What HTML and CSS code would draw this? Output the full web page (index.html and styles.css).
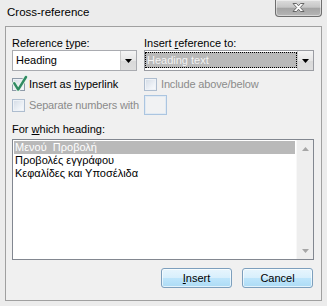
FILE: index.html
```html
<!DOCTYPE html>
<html>
<head>
<meta charset="utf-8">
<title>Cross-reference</title>
<link rel="stylesheet" href="styles.css">
</head>
<body>
<div class="window">
  <div class="titlebar">
    <span class="title">Cross-reference</span>
    <div class="close">
      <svg width="15" height="11" viewBox="0 0 15 11">
        <path d="M2 1.5 H5.5 L7.5 3.8 L9.5 1.5 H13 L9.3 5.5 L13 9.5 H9.5 L7.5 7.2 L5.5 9.5 H2 L5.7 5.5 Z" fill="#ffffff" stroke="#5a5a5a" stroke-width="0.9" stroke-linejoin="round"/>
      </svg>
    </div>
  </div>
  <div class="client">
    <div class="top">
      <div class="field">
        <div class="lbl">Reference <u>t</u>ype:</div>
        <div class="combo">
          <span class="combo-text">Heading</span>
          <span class="drop"><svg width="7" height="4" viewBox="0 0 7 4"><path d="M0 0 H7 L3.5 4 Z" fill="#000"/></svg></span>
        </div>
      </div>
      <div class="field">
        <div class="lbl">Insert <u>r</u>eference to:</div>
        <div class="combo combo-dark">
          <span class="combo-sel">Heading text</span>
          <span class="drop"><svg width="7" height="4" viewBox="0 0 7 4"><path d="M0 0 H7 L3.5 4 Z" fill="#000"/></svg></span>
        </div>
      </div>
      <div class="check-row r2">
        <span class="cb checked">
          <svg class="tick" width="16" height="17" viewBox="0 0 16 17">
            <path d="M2.2 8.2 L6.2 14.6 L14 2" fill="none" stroke="#e6f3ea" stroke-width="4.2" stroke-linecap="round" stroke-linejoin="round"/>
            <path d="M2.2 8.2 L6.2 14.6 L14 2" fill="none" stroke="#2f8a62" stroke-width="2.4" stroke-linecap="round" stroke-linejoin="round"/>
          </svg>
        </span>
        <span class="cb-text">Insert as <u>h</u>yperlink</span>
      </div>
      <div class="check-row r2">
        <span class="cb"></span>
        <span class="cb-text dis">Include above/below</span>
      </div>
      <div class="check-row r3">
        <span class="cb"></span>
        <span class="cb-text dis">Separate numbers with</span>
      </div>
      <div class="r3">
        <div class="textbox"></div>
      </div>
    </div>
    <div class="lbl lbl-list">For <u>w</u>hich heading:</div>
    <div class="listbox">
      <div class="items">
        <div class="item sel">Μενού  Προβολή</div>
        <div class="item">Προβολές εγγράφου</div>
        <div class="item">Κεφαλίδες και Υποσέλιδα</div>
      </div>
      <div class="vscroll">
        <div class="sbtn"><svg width="7" height="4" viewBox="0 0 7 4"><path d="M0 4 H7 L3.5 0 Z" fill="#a6a6a6"/></svg></div>
        <div class="sbtn"><svg width="7" height="4" viewBox="0 0 7 4"><path d="M0 0 H7 L3.5 4 Z" fill="#a6a6a6"/></svg></div>
      </div>
    </div>
    <div class="buttons">
      <div class="btn"><u>I</u>nsert</div>
      <div class="btn">Cancel</div>
    </div>
  </div>
</div>
</body>
</html>
```

FILE: styles.css
```css
* { box-sizing: border-box; }
html, body { margin: 0; padding: 0; }
body {
  width: 327px;
  height: 306px;
  overflow: hidden;
  background: #ececec;
  font-family: "Liberation Sans", Arial, sans-serif;
  font-size: 11px;
  color: #000;
}
u { text-decoration-thickness: 1px; text-underline-offset: 1px; }
.window {
  width: 327px;
  height: 306px;
  background: #ececec;
  display: flex;
  flex-direction: column;
}
.titlebar {
  height: 26px;
  display: flex;
  align-items: flex-start;
}
.title {
  padding: 5px 0 0 7px;
  font-size: 11.5px;
  line-height: 14px;
}
.close {
  margin-left: auto;
  margin-right: 5px;
  width: 47px;
  height: 17px;
  border: 1px solid #6e6e6e;
  border-top: none;
  border-radius: 0 0 4px 4px;
  background: linear-gradient(#dcdcdc, #c6c6c6 45%, #a4a4a4 52%, #b6b6b6);
  box-shadow: inset 0 0 0 1px rgba(255,255,255,0.45);
  display: flex;
  align-items: center;
  justify-content: center;
  padding-bottom: 2px;
}
.client {
  margin: 0 5px;
  height: 275px;
  border: 1px solid #a0a0a0;
  background: #f0f0f0;
  padding: 9px 7px 12px 6px;
  display: flex;
  flex-direction: column;
}
.top {
  display: grid;
  grid-template-columns: 125px 170px;
  column-gap: 7px;
}
.field { display: flex; flex-direction: column; }
.lbl { height: 14px; line-height: 14px; white-space: nowrap; }
.combo {
  height: 21px;
  border: 1px solid #a9abb0;
  background: #fff;
  display: flex;
  align-items: stretch;
}
.combo-dark { border-color: #9a9ca2; }
.combo-text {
  flex: 1;
  padding-left: 3px;
  line-height: 19px;
}
.combo-sel {
  flex: 1;
  margin: 1px 0 2px 0;
  background: #b9b9b9;
  color: #f4f4f4;
  border: 1px dotted #000;
  padding-left: 1px;
  line-height: 14px;
}
.drop {
  width: 16px;
  background: linear-gradient(#f4f4f4, #e6e6e6 50%, #d9d9d9 51%, #dedede);
  border-left: 1px solid #c9c9c9;
  display: flex;
  align-items: center;
  justify-content: center;
}
.check-row {
  display: flex;
  align-items: center;
  height: 13px;
  white-space: nowrap;
}
.r2 { margin-top: 7px; }
.r3 { margin-top: 4px; height: 20px; }
.cb {
  position: relative;
  width: 13px;
  height: 13px;
  flex: none;
  border: 1px solid #aebdcf;
  background: linear-gradient(135deg, #d3dbe5, #eef2f7 65%, #fafbfc);
  box-shadow: inset 0 0 0 1px #eef2f7;
}
.cb.checked {
  border-color: #8e9aa8;
}
.tick {
  position: absolute;
  left: -1px;
  top: -4px;
}
.cb-text {
  margin-left: 4px;
  line-height: 13px;
}
.dis { color: #8b8b8b; letter-spacing: -0.15px; }
.textbox {
  width: 23px;
  height: 20px;
  border: 1px solid #abc5e0;
  background: #f1f2f3;
  box-shadow: inset 0 0 0 1px #e1eaf3;
}
.lbl-list { margin-top: 7px; }
.listbox {
  margin-top: 3px;
  height: 121px;
  border: 1px solid #828790;
  background: #fff;
  display: flex;
}
.items { flex: 1; padding: 1px; }
.item {
  height: 13px;
  line-height: 13px;
  padding-left: 1px;
  white-space: pre;
}
.item.sel { background: #b9b9b9; color: #fff; }
.vscroll {
  width: 17px;
  background: #eeeeee;
  border-left: 1px solid #f8f8f8;
  display: flex;
  flex-direction: column;
  justify-content: space-between;
}
.sbtn {
  height: 17px;
  display: flex;
  align-items: center;
  justify-content: center;
}
.buttons {
  margin-top: 8px;
  display: flex;
  justify-content: flex-end;
  gap: 10px;
  padding-right: 1px;
}
.btn {
  width: 71px;
  height: 20px;
  border: 1px solid #7d9fbd;
  border-radius: 3px;
  background: linear-gradient(#e7f5fd, #d8effc 48%, #bee5fb 52%, #acdbf5);
  box-shadow: inset 0 0 0 1px rgba(255,255,255,0.65);
  text-align: center;
  line-height: 19px;
}
```
